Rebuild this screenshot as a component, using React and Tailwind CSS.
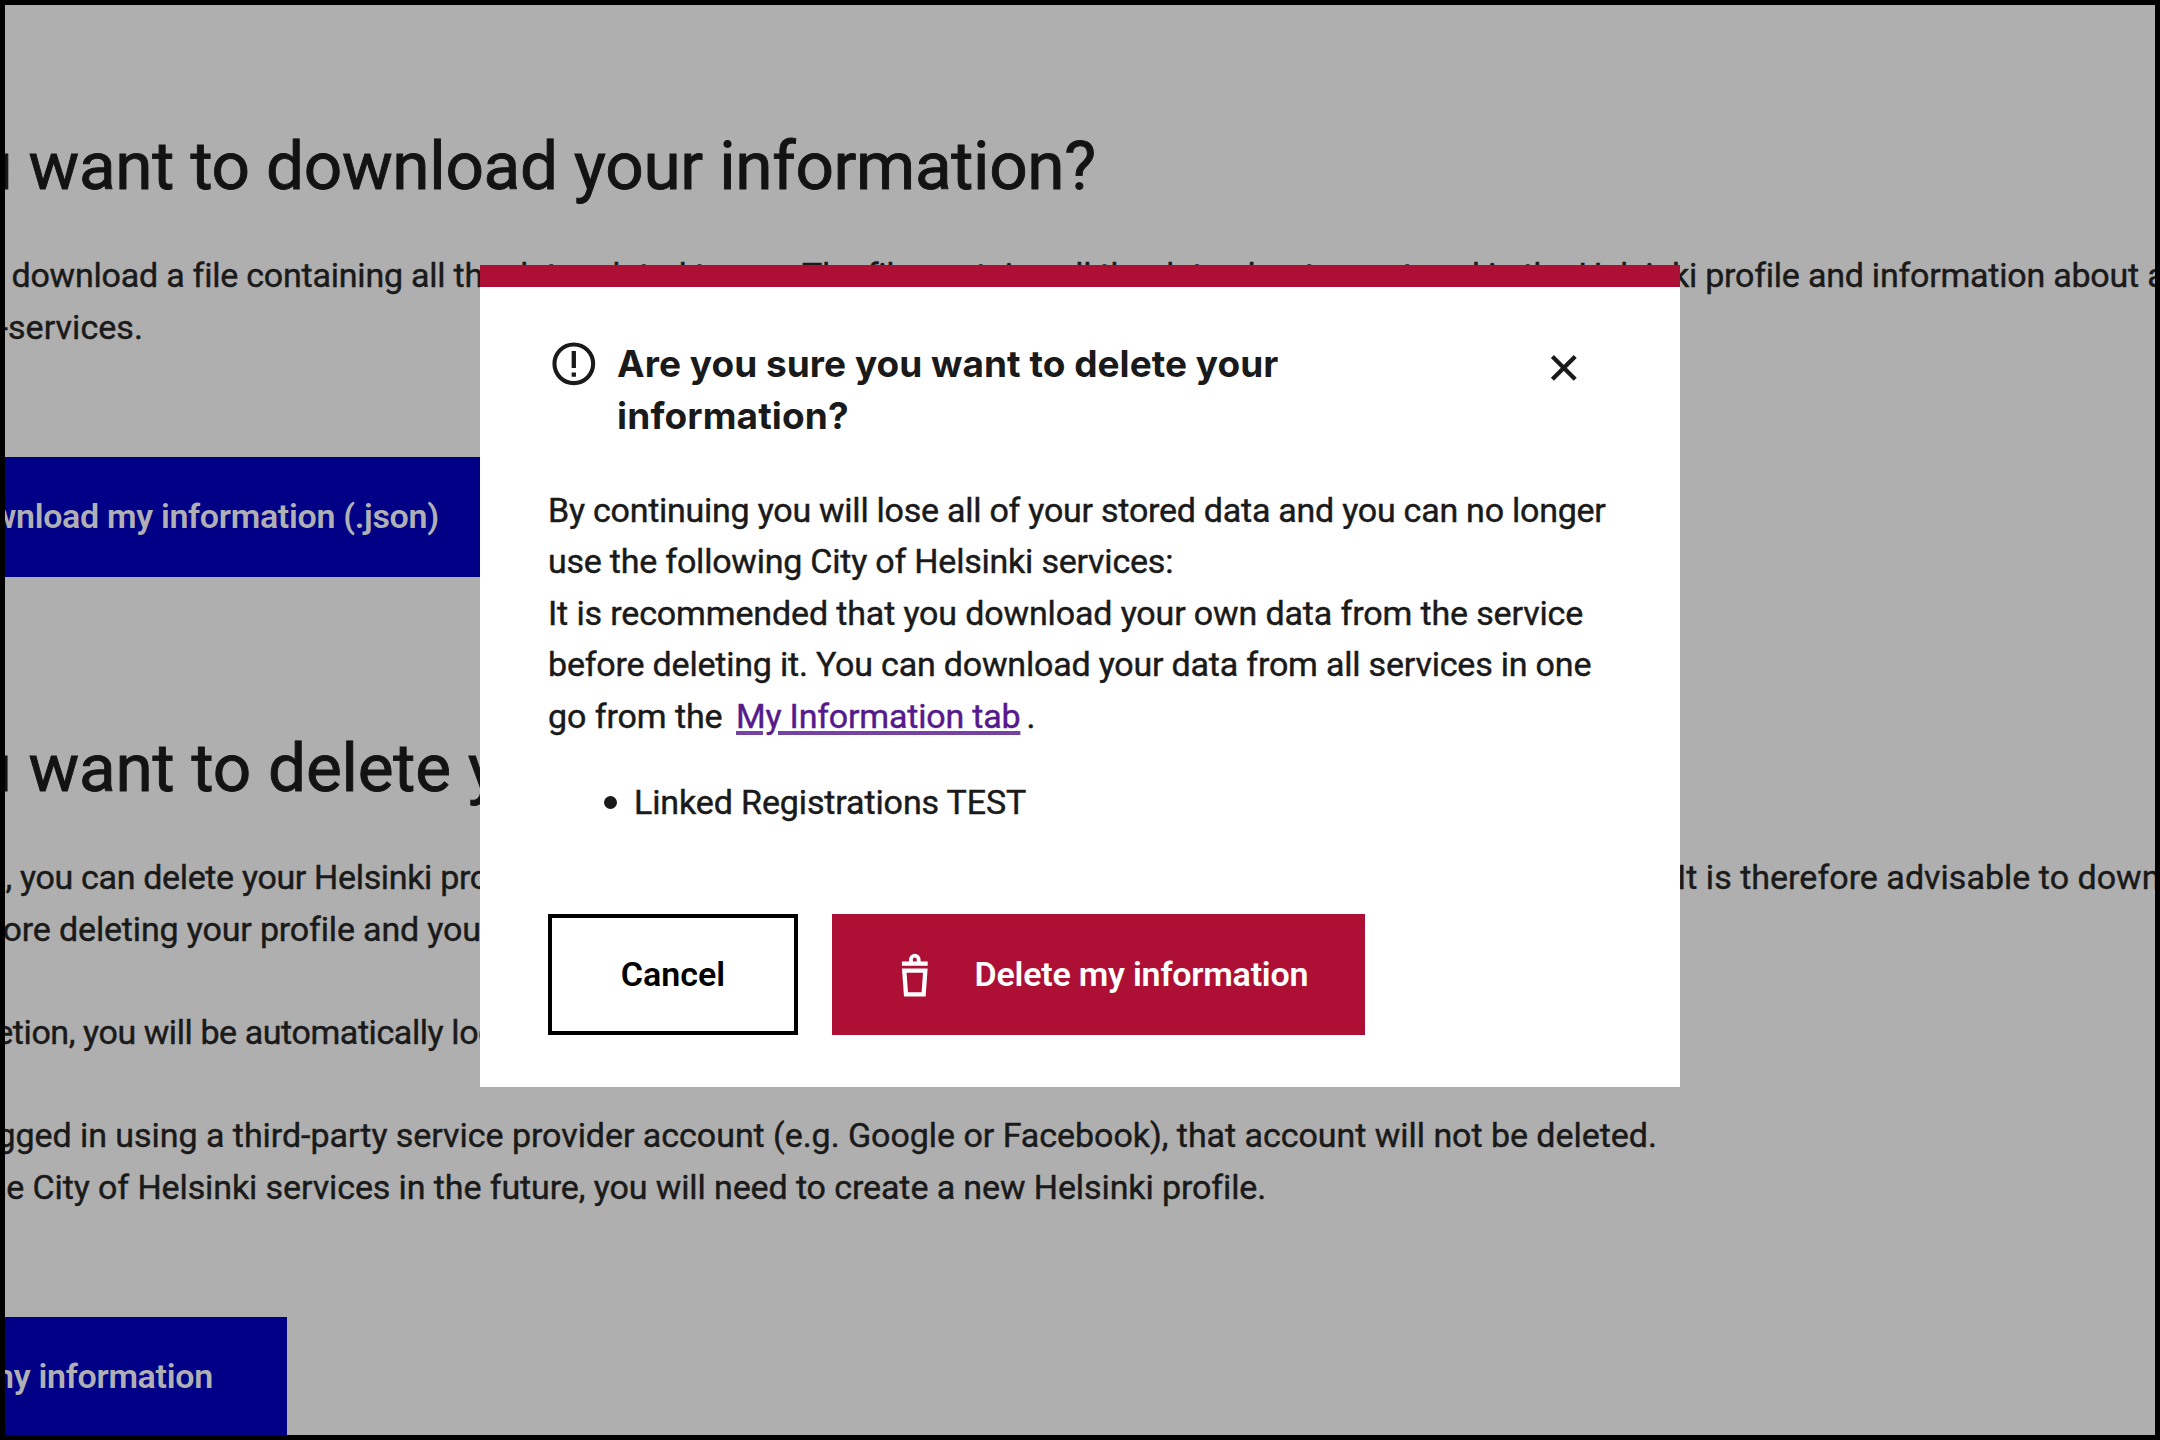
import React from "react";

/* A line of page text; `lead` is the part that runs off the left edge. */
function Line({ lead = "", leadClass, className = "", children }) {
  return (
    <div className={`flex h-[51.6px] shrink-0 whitespace-pre leading-[51.6px] ${className}`}>
      <span className={`flex shrink-0 justify-end overflow-hidden ${leadClass}`}>{lead}</span>
      <span className="shrink-0">{children}</span>
    </div>
  );
}

function PageHeading({ className, children }) {
  return (
    <h2 className={`flex h-20 whitespace-pre text-[67.5px] leading-[80px] text-[#131313] [-webkit-text-stroke:0.9px] ${className}`}>
      <span className="flex w-[23.5px] shrink-0 justify-end overflow-hidden">u </span>
      <span className="shrink-0">{children}</span>
    </h2>
  );
}

function AlertIcon() {
  return (
    <svg viewBox="0 0 24 24" className="size-[51.6px] shrink-0" fill="none">
      <circle cx="12" cy="12" r="9" stroke="currentColor" strokeWidth="1.9" />
      <path d="M11 6h2v8h-2zM11 16h2v2h-2z" fill="currentColor" />
    </svg>
  );
}

function CrossIcon() {
  return (
    <svg viewBox="0 0 24 24" className="size-[51.6px]" fill="none">
      <path d="M6.7 6.7l10.6 10.6M17.3 6.7L6.7 17.3" stroke="currentColor" strokeWidth="2" />
    </svg>
  );
}

function TrashIcon() {
  return (
    <svg viewBox="0 0 24 24" className="size-[51.6px] shrink-0" fill="none" stroke="currentColor" strokeWidth="2">
      <path d="M10.2 6.4V4.9a1.8 1.8 0 0 1 3.6 0v1.5" strokeWidth="1.8" />
      <path d="M6 6.8h12" />
      <path d="M7.1 10.1h9.8l-.8 11H7.9z" />
    </svg>
  );
}

function Page() {
  return (
    <main className="pt-[120.5px] text-[34px] tracking-[-0.12px] text-[#1a1a1a] [-webkit-text-stroke:0.45px]">
      <PageHeading className="tracking-[-0.33px]">want to download your information?</PageHeading>
      <div className="mt-[44.5px]">
        <Line leadClass="w-[6.5px]" className="tracking-[-0.225px]">
          download a file containing all the data related to you. The file contains all the data about you stored in the Helsinki profile and information about all
        </Line>
        <Line lead="-" leadClass="w-[3px]" className="tracking-[0.05px]">services.</Line>
      </div>
      <button className="mt-[104px] flex h-[120px] w-[600px] items-center bg-[#000086] font-semibold text-[#b0b0b4] [-webkit-text-stroke:0px]">
        <Line lead="Download " leadClass="w-[102px]" className="tracking-[-0.32px]">my information (.json)</Line>
      </button>
      <div className="mt-[150.5px]">
        <PageHeading className="tracking-[-0.2px] [word-spacing:0.5px]">want to delete your</PageHeading>
      </div>
      <div className="mt-[44.5px]">
        <div className="flex">
          <div className="w-[1672px] shrink-0 overflow-hidden">
            <Line lead=", " leadClass="w-[15px]" className="tracking-[-0.34px]">you can delete your Helsinki profile</Line>
          </div>
          <Line leadClass="w-0" className="tracking-[0.02px]">It is therefore advisable to download</Line>
        </div>
        <Line lead="before " leadClass="w-[54px]" className="tracking-[-0.16px]">deleting your profile and your</Line>
        <Line className="mt-[51.6px] tracking-[-0.42px]" lead="deletion, " leadClass="w-[78px]">you will be automatically logged</Line>
        <Line className="mt-[51.6px] tracking-[-0.04px]" lead="logged " leadClass="w-[75px]">
          in using a third-party service provider account (e.g. Google or Facebook), that account will not be deleted.
        </Line>
        <Line className="tracking-[-0.1px]" lead="use " leadClass="w-[27.5px]">
          City of Helsinki services in the future, you will need to create a new Helsinki profile.
        </Line>
      </div>
      <button className="mt-[103.5px] flex h-[120px] w-[282px] items-center bg-[#000086] font-semibold text-[#b0b0b4] [-webkit-text-stroke:0px]">
        <Line lead="my " leadClass="w-[33.5px]" className="tracking-[-0.3px]">information</Line>
      </button>
    </main>
  );
}

function DeleteDialog() {
  return (
    <section
      role="dialog"
      className="absolute left-[475px] top-[260px] flex h-[822px] w-[1200px] flex-col border-t-[22px] border-[#ae0f34] bg-white pl-[68px] pt-[51px] text-[34px] leading-[51.6px] text-[#1a1a1a]"
    >
      <header className="flex whitespace-nowrap">
        <AlertIcon />
        <h3 className="ml-[17.5px] w-[921px] font-[Inter] text-[37px] font-bold">
          <span className="block tracking-[0.03px]">Are you sure you want to delete your</span>
          <span className="block tracking-[0.12px]">information?</span>
        </h3>
        <button className="mt-[4px] size-[51.6px]" aria-label="Close">
          <CrossIcon />
        </button>
      </header>
      <div className="mt-[43.5px] whitespace-nowrap [-webkit-text-stroke:0.45px]">
        <p className="tracking-[-0.25px]">By continuing you will lose all of your stored data and you can no longer</p>
        <p className="tracking-[-0.22px]">use the following City of Helsinki services:</p>
        <p className="tracking-[-0.14px]">It is recommended that you download your own data from the service</p>
        <p className="tracking-[-0.2px]">before deleting it. You can download your data from all services in one</p>
        <p className="flex">
          <span className="w-[188px] tracking-[-0.08px]">go from the</span>
          <a className="tracking-[-0.2px] text-[#551a8b] underline decoration-[#7543a3] decoration-4 underline-offset-[3px]">
            My Information tab
          </a>
          <span className="ml-[6px]">.</span>
        </p>
      </div>
      <ul className="mt-[34px] whitespace-nowrap [-webkit-text-stroke:0.45px]">
        <li className="flex items-center">
          <span className="ml-[56px] mr-[17px] size-[13px] rounded-full bg-[#1a1a1a]" />
          <span className="tracking-[-0.12px]">Linked Registrations TEST</span>
        </li>
      </ul>
      <footer className="mt-[86px] flex h-[121px] gap-[34px] whitespace-nowrap font-semibold">
        <button className="flex w-[250px] items-center justify-center border-[4px] border-black text-black">
          Cancel
        </button>
        <button className="flex w-[533px] items-center bg-[#ae0f34] pl-[56.5px] text-white">
          <TrashIcon />
          <span className="ml-[34.5px] tracking-[-0.22px]">Delete my information</span>
        </button>
      </footer>
    </section>
  );
}

export default function App() {
  return (
    <div className="relative h-[1440px] w-[2160px] overflow-hidden border-[5px] border-black bg-[#afafaf] font-[Roboto]">
      <Page />
      <DeleteDialog />
    </div>
  );
}
